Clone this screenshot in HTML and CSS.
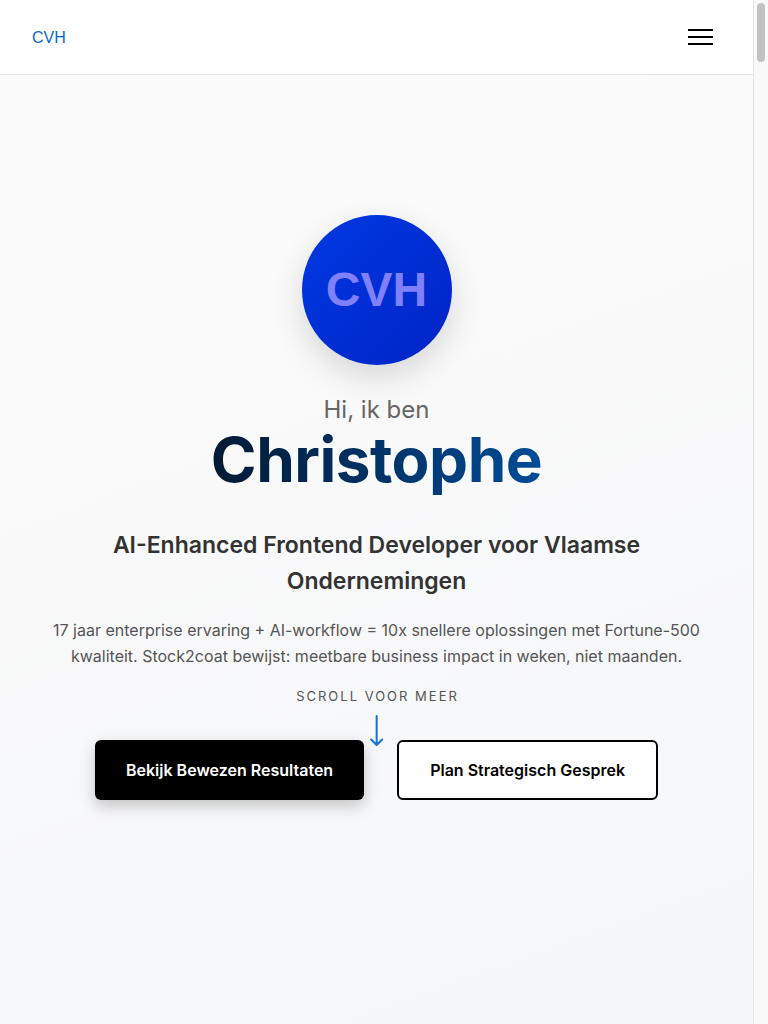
FILE: index.html
```html
<!DOCTYPE html>
<html lang="nl">
<head>
<meta charset="utf-8">
<title>Christophe — AI-Enhanced Frontend Developer</title>
<link rel="stylesheet" href="styles.css">
</head>
<body>
<div class="page">
  <header class="site-header">
    <a class="logo" href="#">CVH</a>
    <button class="menu-toggle" aria-label="Menu">
      <span></span><span></span><span></span>
    </button>
  </header>
  <main>
    <section class="hero">
      <div class="avatar"><span>CVH</span></div>
      <p class="greeting">Hi, ik ben</p>
      <h1 class="name">Christophe</h1>
      <h2 class="tagline">AI-Enhanced Frontend Developer voor Vlaamse Ondernemingen</h2>
      <p class="intro">17 jaar enterprise ervaring + AI-workflow = 10x snellere oplossingen met Fortune-500 kwaliteit. Stock2coat bewijst: meetbare business impact in weken, niet maanden.</p>
      <div class="actions">
        <div class="scroll-hint">
          <span class="scroll-text">SCROLL VOOR MEER</span>
          <svg class="scroll-arrow" width="14" height="32" viewBox="0 0 14 32" aria-hidden="true">
            <path d="M7 1 V30 M1.5 24.5 L7 30 L12.5 24.5" fill="none" stroke="#1a6fd6" stroke-width="2" stroke-linecap="round" stroke-linejoin="round"/>
          </svg>
        </div>
        <a class="btn btn-primary" href="#">Bekijk Bewezen Resultaten</a>
        <a class="btn btn-outline" href="#">Plan Strategisch Gesprek</a>
      </div>
    </section>
    <section class="rest"></section>
  </main>
</div>
<div class="scroll-rail" aria-hidden="true"><div class="scroll-thumb"></div></div>
</body>
</html>
```
FILE: styles.css
```css
* { box-sizing: border-box; }

html, body {
  margin: 0;
  padding: 0;
  height: 100%;
  overflow: hidden;
}

body {
  font-family: Inter, "Noto Sans", "Liberation Sans", sans-serif;
  color: #333;
  background: #f7f8fa;
  display: flex;
}

.page {
  flex: 1;
  min-width: 0;
  height: 100vh;
  overflow-y: auto;
  scrollbar-width: none;
}

.page::-webkit-scrollbar {
  display: none;
}

.scroll-rail {
  width: 15px;
  flex: none;
  height: 100vh;
  background: #f9f9f9;
  border-left: 1px solid #e4e4e4;
  padding: 3px 3px 0 3px;
}

.scroll-thumb {
  height: 59px;
  background: #c2c2c2;
  border-radius: 4px;
}

.site-header {
  height: 75px;
  display: flex;
  align-items: center;
  justify-content: space-between;
  padding: 0 40px 0 32px;
  background: #fff;
  border-bottom: 1px solid #e3e3e3;
}

.logo {
  font-family: "Liberation Sans", Arial, sans-serif;
  font-size: 16px;
  color: #0a66d0;
  text-decoration: none;
  margin-top: 1px;
}

.menu-toggle {
  width: 25px;
  height: 16px;
  padding: 0;
  border: 0;
  background: none;
  display: flex;
  flex-direction: column;
  justify-content: space-between;
  cursor: pointer;
}

.menu-toggle span {
  display: block;
  height: 2px;
  background: #000;
}

.hero {
  background: linear-gradient(160deg, #fbfbfb 0%, #f6f7f9 100%);
  min-height: 949px;
  padding: 140px 24px 0;
  display: flex;
  flex-direction: column;
  align-items: center;
  text-align: center;
}

.avatar {
  width: 150px;
  height: 150px;
  border-radius: 50%;
  background: linear-gradient(135deg, #0039e3 0%, #0024c6 100%);
  box-shadow: 0 12px 32px rgba(0, 0, 0, 0.14);
  display: flex;
  align-items: center;
  justify-content: center;
}

.avatar span {
  font-family: "Liberation Sans", Arial, sans-serif;
  font-weight: 700;
  font-size: 48px;
  color: #8080ff;
  line-height: 1;
}

.greeting {
  margin: 29px 0 0;
  font-size: 24px;
  line-height: 1.3;
  color: #666;
}

.name {
  margin: -1px 0 0;
  font-size: 62px;
  line-height: 1.15;
  font-weight: 700;
  letter-spacing: -0.5px;
  background: linear-gradient(90deg, #001a33 0%, #004c99 100%);
  -webkit-background-clip: text;
  background-clip: text;
  color: transparent;
}

.tagline {
  margin: 32px 0 0;
  max-width: 620px;
  font-size: 23px;
  line-height: 36px;
  font-weight: 600;
  color: #333;
}

.intro {
  margin: 19px 0 0;
  max-width: 680px;
  font-size: 16px;
  line-height: 1.6;
  color: #555;
}

.actions {
  position: relative;
  margin-top: 70px;
  display: flex;
  gap: 33px;
  justify-content: center;
}

.scroll-hint {
  position: absolute;
  left: 50%;
  top: -52px;
  transform: translateX(-50%);
  display: flex;
  flex-direction: column;
  align-items: center;
  gap: 11px;
  pointer-events: none;
}

.scroll-text {
  font-size: 13px;
  letter-spacing: 2px;
  margin-right: -2px;
  color: #555;
  white-space: nowrap;
  line-height: 16px;
}

.scroll-arrow {
  display: block;
}

.btn {
  height: 60px;
  padding: 0 31px;
  display: flex;
  align-items: center;
  border-radius: 6px;
  font-size: 16px;
  font-weight: 600;
  text-decoration: none;
  white-space: nowrap;
}

.btn-primary {
  background: #000;
  color: #fff;
  border: 0;
  box-shadow: 0 6px 16px rgba(0, 0, 0, 0.22);
}

.btn-outline {
  background: #fff;
  color: #000;
  border: 2px solid #000;
}

.rest {
  height: 16000px;
  background: #f7f8fa;
}
```
